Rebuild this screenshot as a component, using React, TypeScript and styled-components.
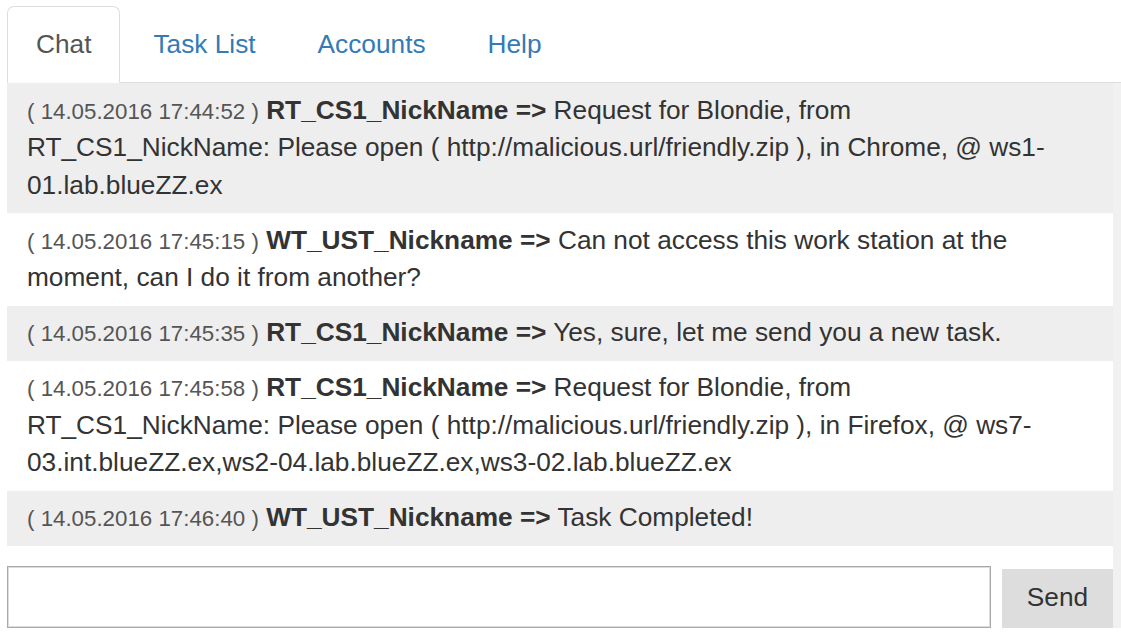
import React from "react";
import styled, { createGlobalStyle } from "styled-components";

const GlobalStyle = createGlobalStyle`
  html, body {
    margin: 0;
    padding: 0;
    background: #fff;
  }
  body {
    font-family: "Liberation Sans", Arial, Helvetica, sans-serif;
    font-size: 26.25px;
    line-height: 37.5px;
    color: #333;
  }
  * {
    box-sizing: border-box;
  }
`;

const Page = styled.div`
  padding: 6px 0 14px 7px;
`;

const TabBar = styled.ul`
  display: flex;
  list-style: none;
  margin: 0;
  padding: 0;
  border-bottom: 1px solid #ddd;
`;

const Tab = styled.li<{ $active?: boolean }>`
  margin-right: 4px;
  margin-bottom: -1px;

  a {
    display: block;
    padding: 18.75px 28px;
    line-height: 37.5px;
    border: 1px solid ${(p) => (p.$active ? "#ddd" : "transparent")};
    border-bottom-color: ${(p) => (p.$active ? "#fff" : "transparent")};
    border-radius: 7px 7px 0 0;
    background: ${(p) => (p.$active ? "#fff" : "transparent")};
    color: ${(p) => (p.$active ? "#555" : "#337ab7")};
    text-decoration: none;
  }
`;

const Body = styled.div`
  display: flex;
`;

const Content = styled.div`
  flex: 1;
`;

const Track = styled.div`
  width: 8px;
  background: #f1f1f1;
`;

const MessageList = styled.div`
  display: flex;
  flex-direction: column;
`;

const Message = styled.div<{ $shaded: boolean }>`
  padding: 8.75px 20px;
  background: ${(p) => (p.$shaded ? "#eee" : "#fff")};
`;

const Stamp = styled.small`
  font-size: 85%;
  line-height: 1;
  color: #555;
`;

const Author = styled.b`
  font-weight: bold;
  color: #333;
`;

const SendForm = styled.form`
  display: flex;
  align-items: flex-end;
  gap: 11px;
  margin-top: 20px;
`;

const Input = styled.input`
  flex: 1;
  height: 62px;
  border: 1px solid #a9a9a9;
  box-shadow: inset 0 0 0 1px #ddd;
  background: #fff;
  font: inherit;
  padding: 0 12px;
  outline: none;
`;

const SendButton = styled.button`
  width: 111px;
  height: 59px;
  border: none;
  background: #ddd;
  color: #333;
  font: inherit;
  padding: 0;
  cursor: pointer;
`;

const tabs = ["Chat", "Task List", "Accounts", "Help"];

const messages = [
  {
    time: "14.05.2016 17:44:52",
    from: "RT_CS1_NickName",
    text: "Request for Blondie, from RT_CS1_NickName: Please open ( http://malicious.url/friendly.zip ), in Chrome, @ ws1-01.lab.blueZZ.ex",
  },
  {
    time: "14.05.2016 17:45:15",
    from: "WT_UST_Nickname",
    text: "Can not access this work station at the moment, can I do it from another?",
  },
  {
    time: "14.05.2016 17:45:35",
    from: "RT_CS1_NickName",
    text: "Yes, sure, let me send you a new task.",
  },
  {
    time: "14.05.2016 17:45:58",
    from: "RT_CS1_NickName",
    text: "Request for Blondie, from RT_CS1_NickName: Please open ( http://malicious.url/friendly.zip ), in Firefox, @ ws7-03.int.blueZZ.ex,ws2-04.lab.blueZZ.ex,ws3-02.lab.blueZZ.ex",
  },
  {
    time: "14.05.2016 17:46:40",
    from: "WT_UST_Nickname",
    text: "Task Completed!",
  },
];

const App = () => {
  return (
    <Page>
      <GlobalStyle />
      <TabBar>
        {tabs.map((t, i) => (
          <Tab key={t} $active={i === 0}>
            <a href="#">{t}</a>
          </Tab>
        ))}
      </TabBar>
      <Body>
        <Content>
          <MessageList>
            {messages.map((m, i) => (
              <Message key={i} $shaded={i % 2 === 0}>
                <Stamp>( {m.time} )</Stamp> <Author>{m.from} =&gt;</Author> {m.text}
              </Message>
            ))}
          </MessageList>
          <SendForm onSubmit={(e) => e.preventDefault()}>
            <Input type="text" />
            <SendButton type="submit">Send</SendButton>
          </SendForm>
        </Content>
        <Track />
      </Body>
    </Page>
  );
};

export default App;
